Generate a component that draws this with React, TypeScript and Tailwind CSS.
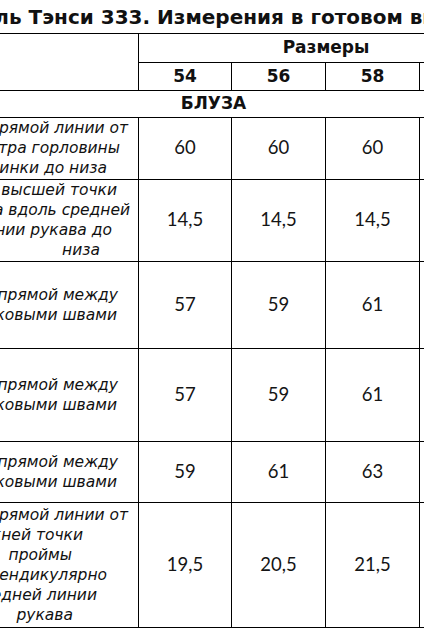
import React from 'react';

type Line = { text: string; pr: string };
type Row = { h: string; lines: Line[]; values: string[] };

const rows: Row[] = [
  {
    h: 'h-[62px]',
    lines: [
      { text: 'По прямой линии от', pr: 'pr-[10px]' },
      { text: 'центра горловины', pr: 'pr-[18px]' },
      { text: 'спинки до низа', pr: 'pr-[31px]' },
    ],
    values: ['60', '60', '60', '60'],
  },
  {
    h: 'h-[82px]',
    lines: [
      { text: 'От высшей точки', pr: 'pr-[21px]' },
      { text: 'оката вдоль средней', pr: 'pr-[8px]' },
      { text: 'линии рукава до', pr: 'pr-[26px]' },
      { text: 'низа', pr: 'pr-[38px]' },
    ],
    values: ['14,5', '14,5', '14,5', '14,5'],
  },
  {
    h: 'h-[87px]',
    lines: [
      { text: 'По прямой между', pr: 'pr-[20px]' },
      { text: 'боковыми швами', pr: 'pr-[21px]' },
    ],
    values: ['57', '59', '61', '63'],
  },
  {
    h: 'h-[93px]',
    lines: [
      { text: 'По прямой между', pr: 'pr-[20px]' },
      { text: 'боковыми швами', pr: 'pr-[21px]' },
    ],
    values: ['57', '59', '61', '63'],
  },
  {
    h: 'h-[61px]',
    lines: [
      { text: 'По прямой между', pr: 'pr-[20px]' },
      { text: 'боковыми швами', pr: 'pr-[21px]' },
    ],
    values: ['59', '61', '63', '65'],
  },
  {
    h: 'h-[125px]',
    lines: [
      { text: 'По прямой линии от', pr: 'pr-[10px]' },
      { text: 'нижней точки', pr: 'pr-[55px]' },
      { text: 'проймы', pr: 'pr-[66px]' },
      { text: 'перпендикулярно', pr: 'pr-[31px]' },
      { text: 'средней линии', pr: 'pr-[41px]' },
      { text: 'рукава', pr: 'pr-[65px]' },
    ],
    values: ['19,5', '20,5', '21,5', '22,5'],
  },
];

const cell = 'border border-black p-0';
const boldFont = "font-['DejaVu_Sans',sans-serif] font-bold text-[17px] text-[#111]";
const numFont = "font-['Lato',sans-serif] text-[18.5px] text-[#151515]";
const labelFont = "font-['DejaVu_Sans',sans-serif] italic text-[15.5px] leading-[20px] text-[#111]";

export default function App() {
  return (
    <div className="w-[424px] h-[636px] overflow-hidden bg-white">
      {/* Title */}
      <div className="h-[33px] overflow-hidden">
        <div className="ml-[-69px] whitespace-nowrap pt-[6px] font-['DejaVu_Sans',sans-serif] font-bold text-[20px] leading-[22px] text-[#111]">
          Модель Тэнси 333. Измерения в готовом виде
        </div>
      </div>

      <table className="ml-[-87px] w-[600px] min-w-[600px] table-fixed border-collapse">
        <colgroup>
          <col className="w-[225px]" />
          <col className="w-[93px]" />
          <col className="w-[94px]" />
          <col className="w-[94px]" />
          <col className="w-[94px]" />
        </colgroup>
        <tbody>
          <tr className="h-[29px]">
            <td rowSpan={2} className={cell} />
            <td colSpan={4} className={`${cell} ${boldFont} text-center`}>
              Размеры
            </td>
          </tr>
          <tr className="h-[28px]">
            {['54', '56', '58', '60'].map((s) => (
              <td key={s} className={`${cell} ${boldFont} text-center`}>
                {s}
              </td>
            ))}
          </tr>
          <tr className="h-[23px]">
            <td colSpan={5} className={`${cell} ${boldFont} text-center`}>
              БЛУЗА
            </td>
          </tr>
          {rows.map((r, i) => (
            <tr key={i} className={r.h}>
              <td className={`${cell} ${labelFont}`}>
                {r.lines.map((l, j) => (
                  <div key={j} className={`text-right whitespace-nowrap ${l.pr}`}>
                    {l.text}
                  </div>
                ))}
              </td>
              {r.values.map((v, j) => (
                <td key={j} className={`${cell} ${numFont} text-center`}>
                  {v}
                </td>
              ))}
            </tr>
          ))}
        </tbody>
      </table>
    </div>
  );
}
